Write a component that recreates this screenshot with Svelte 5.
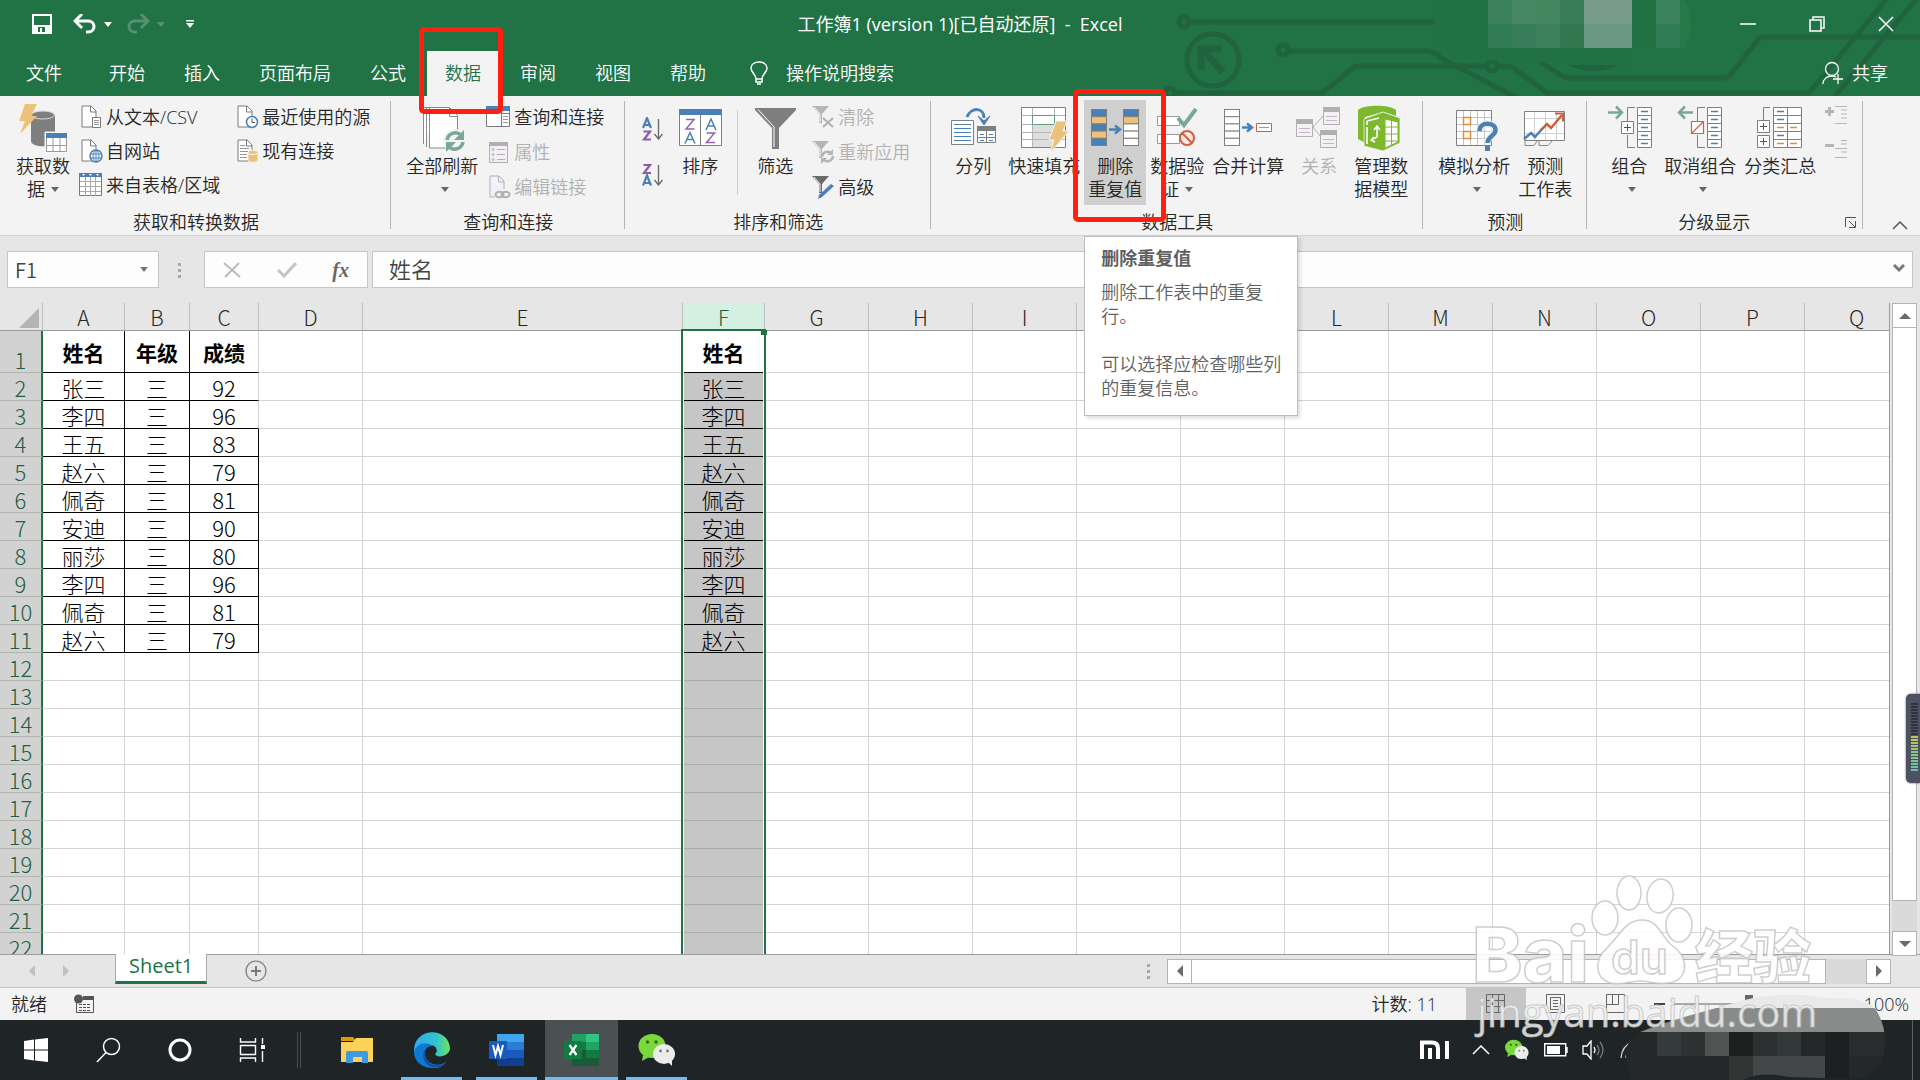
<script lang="ts">
	interface Tool {
		icon: string;
		lines: string[];
		arrow?: boolean;
		disabled?: boolean;
		active?: boolean;
	}

	interface SmallTool {
		icon: string;
		label: string;
		disabled?: boolean;
	}

	let nameBox = $state('F1');
	let formula = $state('姓名');
	let zoom = $state(50);
	let activeTab = $state('数据');

	const tabs = ['文件', '开始', '插入', '页面布局', '公式', '数据', '审阅', '视图', '帮助'];

	const sources: SmallTool[] = [
		{ icon: 'docText', label: '从文本/CSV' },
		{ icon: 'docWeb', label: '自网站' },
		{ icon: 'tableBlue', label: '来自表格/区域' }
	];

	const recent: SmallTool[] = [
		{ icon: 'docClock', label: '最近使用的源' },
		{ icon: 'docData', label: '现有连接' }
	];

	const connections: SmallTool[] = [
		{ icon: 'pane', label: '查询和连接' },
		{ icon: 'props', label: '属性', disabled: true },
		{ icon: 'docLink', label: '编辑链接', disabled: true }
	];

	const filters: SmallTool[] = [
		{ icon: 'filterClear', label: '清除', disabled: true },
		{ icon: 'filterRedo', label: '重新应用', disabled: true },
		{ icon: 'filterPen', label: '高级' }
	];

	const dataTools: Tool[] = [
		{ icon: 'split', lines: ['分列'] },
		{ icon: 'flash', lines: ['快速填充'] },
		{ icon: 'dedupe', lines: ['删除', '重复值'], active: true },
		{ icon: 'validate', lines: ['数据验', '证'], arrow: true },
		{ icon: 'merge', lines: ['合并计算'] },
		{ icon: 'relation', lines: ['关系'], disabled: true },
		{ icon: 'model', lines: ['管理数', '据模型'] }
	];

	const forecast: Tool[] = [
		{ icon: 'whatif', lines: ['模拟分析', ''], arrow: true },
		{ icon: 'forecast', lines: ['预测', '工作表'] }
	];

	const outline: Tool[] = [
		{ icon: 'group', lines: ['组合', ''], arrow: true },
		{ icon: 'ungroup', lines: ['取消组合', ''], arrow: true },
		{ icon: 'subtotal', lines: ['分类汇总'] }
	];

	const columns = [
		{ id: 'A', width: 82 },
		{ id: 'B', width: 65 },
		{ id: 'C', width: 69 },
		{ id: 'D', width: 104 },
		{ id: 'E', width: 320 },
		{ id: 'F', width: 82 },
		...'GHIJKLMNOPQ'.split('').map((id) => ({ id, width: 104 }))
	];

	const records = [
		['姓名', '年级', '成绩'],
		['张三', '三', '92'],
		['李四', '三', '96'],
		['王五', '三', '83'],
		['赵六', '三', '79'],
		['佩奇', '三', '81'],
		['安迪', '三', '90'],
		['丽莎', '三', '80'],
		['李四', '三', '96'],
		['佩奇', '三', '81'],
		['赵六', '三', '79']
	];

	const rows = Array.from({ length: 22 }, (_, i) => i);

	function cell(row: number, col: string) {
		const record = records[row];
		if (!record) return '';
		if (col === 'F') return record[0];
		return record['ABC'.indexOf(col)] ?? '';
	}

	const bolt = '#ecc27b';
	const blue = '#4a80b8';
	const doc = (c = '#7a7a7a', fill = '#fff') =>
		`<path d="M4 1h9l5 5v16H4z" fill="${fill}" stroke="${c}"/><path d="M12.500 1v6h5.500" fill="none" stroke="${c}"/>`;
	const funnel = (c: string) =>
		`<path d="M2 1h17l-7 8v9H9V9z" fill="${c}"/><path d="M4 2l6 7v8" fill="none" stroke="#fff"/>`;
	const bar = (x: number, fills: string[], w = 15) =>
		fills.map((f, i) => `<rect x="${x + 0.5}" y="${5.5 + i * 7.2}" width="${w}" height="7.2" fill="${f}" stroke="#7f7f7f"/>`).join('');
	const list = (x: number) =>
		[0, 1, 2, 3, 4]
			.map((i) => `<path d="M${x + 0.5} ${3.5 + i * 8}h14v8h-14z" fill="#fff" stroke="#7f7f7f"/><path d="M${x + 4} ${7.5 + i * 8}h7" stroke="${blue}" stroke-width="1.500"/>`)
			.join('');
	const plusBox = (x: number, y: number) =>
		`<path d="M${x + 0.5} ${y + 0.5}h12v12h-12z" fill="#fff" stroke="#7f7f7f"/><path d="M${x + 3} ${y + 6.5}h7m-3.500-3.500v7" stroke="#555"/>`;
	const relBox = (x: number, y: number) =>
		`<path d="M${x + 0.5} ${y + 0.5}h16v17h-16z" fill="#f5f0f7" stroke="#b0b0b0"/><path d="M${x} ${y}h17v5h-17z" fill="#b0b0b0"/><path d="M${x + 3} ${y + 9.5}h11m-11 4h11" stroke="#c0b8c4"/>`;

	const large: Record<string, string> = {
		getData: `<path d="M12 11v26c0 7 24 7 24 0V11z" fill="#7f7f7f"/><ellipse cx="24" cy="11" rx="11.500" ry="4" fill="#7f7f7f" stroke="#ddd"/><path d="M6 0h12l-6 12h6L1 30l5-13H0z" fill="${bolt}"/><path d="M26 28h23v21H26z" fill="#fff" stroke="#f3f3f3"/><path d="M27.500 30v17.500h20V30m-20 11.500h20M34 34v13m7-13v13" fill="none" stroke="#9a9a9a"/><path d="M27 29h21v5H27z" fill="${blue}"/>`,
		refresh: `<path d="M5.500 40V3.500h17M8.500 43V3.500M11.500 3.500h20l8 8V44h-28z" fill="#fff" stroke="#8a8a8a"/><path d="M31.500 3.500v9h8" fill="none" stroke="#8a8a8a"/><circle cx="37" cy="37" r="12" fill="#f3f3f3"/><path d="M29 36a8.500 8.500 0 0 1 14-5M45 38a8.500 8.500 0 0 1-14 5" fill="none" stroke="#7aa896" stroke-width="3.500"/><path d="M46 26v10H36zM28 48V38h10z" fill="#7aa896"/>`,
		sort: `<path d="M3.500 5.500h42v36h-42z" fill="#fff" stroke="#7f7f7f"/><path d="M24.500 11v31" stroke="#7f7f7f"/><path d="M3 5h43v6H3z" fill="${blue}"/><g fill="none" stroke-width="1.500"><path d="M10 15.500h8L10 25h8.500M30.500 29h8L30.500 38.500h8.500" stroke="#9261b5"/><path d="M9 39.500l5-11 5 11m-8-4h6M30 26l5-11 5 11m-8-4h6" stroke="${blue}"/></g>`,
		filter: `<path d="M4 4h41v2L28 24v21h-7V24L4 6z" fill="#7f7f7f"/><path d="M7 5.500L23 23v20" fill="none" stroke="#fff"/>`,
		split: `<path d="M2.500 16.500h22v24h-22z" fill="#fff" stroke="#7f7f7f"/><path d="M5 20.500h17m-17 4h17m-17 4h17m-17 4h17m-17 4h17" stroke="${blue}" stroke-width="1.200"/><path d="M18 13C22 3 35 3 35 14" fill="none" stroke="${blue}" stroke-width="3"/><path d="M29 12l6 5 6-5-6 9z" fill="${blue}" stroke="${blue}"/><path d="M28.500 22.500h18v16h-18z" fill="#fff" stroke="#7f7f7f"/><path d="M28 22h19v5H28z" fill="#7f7f7f"/><path d="M37.500 27v11M28 33.500h19" stroke="#7f7f7f"/><path d="M31 30.500h4m5 0h4m-13 6h4m5 0h4" stroke="${blue}"/>`,
		flash: `<path d="M1.500 3.500h44v40h-44z" fill="#fff" stroke="#7f7f7f"/><path d="M12 20h22v23H12z" fill="#dedede"/><path d="M12.500 4v39m22-39v39M2 11.500h43M2 20.500h43M2 28.500h43M2 35.500h43" stroke="#b5b5b5"/><path d="M12.500 11.500h22v9h-22z" fill="#fff" stroke="#5f9c82"/><path d="M36 17h11l-4 10h6L30 49l4-13h-5z" fill="${bolt}" stroke="#f3f3f3"/>`,
		dedupe: `${bar(0, [blue, bolt, blue, bolt, blue])}${bar(32, [blue, bolt, '#fff', '#fff', '#fff'])}<path d="M18 25.500h11m-5-4l5 4-5 4" fill="none" stroke="${blue}" stroke-width="2.500"/>`,
		validate: `<path d="M4.500 12.500h22v9h-22zM4.500 30.500h22v9h-22z" fill="#fff" stroke="#9a9a9a"/><path d="M25 14l6 7L43 5" fill="none" stroke="#7aa896" stroke-width="4"/><circle cx="34" cy="34" r="7" fill="#fbeae5" stroke="#d35e3f" stroke-width="2"/><path d="M29 29l10 10" stroke="#d35e3f" stroke-width="2"/>`,
		merge: `${bar(0, ['#fff', '#fff', '#fff', '#fff', '#fff'])}<path d="M18 23.500h10m-5-4l5 4-5 4" fill="none" stroke="${blue}" stroke-width="2.500"/><path d="M32.500 19.500h15v8h-15z" fill="#fff" stroke="#d35e3f"/><path d="M35 23.500h10" stroke="#999"/>`,
		relation: `<path d="M18 23L29 11M18 23l8 10" stroke="#b0b0b0"/>${relBox(1, 15)}${relBox(28, 3)}${relBox(25, 26)}`,
		model: `<path d="M1 6C8 0 34 1 39 6v6L26 8 8 13v26l-7-4z" fill="#7db82f"/><path d="M7 15l19-7 17 6v25l-17 8-19-5z" fill="#7db82f" stroke="#f3f3f3" stroke-width=".8"/><path d="M28 15l13 3v20l-13 6zM28 23h13M28 30h13M28 37h13M34.500 17v24" fill="#fff" stroke="#7db82f"/><path d="M10 17l12-3M10 21v-4M10 23v17" stroke="#fff" stroke-width="1.500"/><path d="M20 23v10l-6 3m3-10l3-4 3 4m-6 7l-3 3 4 2" fill="none" stroke="#fff" stroke-width="1.500"/>`,
		whatif: `<path d="M6.500 6.500h35v35h-35z" fill="#fff" stroke="#7f7f7f"/><path d="M13.500 7v34m7-34v34m7-34v34m7-34v34M7 13.500h34M7 20.500h34M7 27.500h34M7 34.500h34" stroke="#c4c4c4"/><path d="M13.500 13.500h7v7h-7zM13.500 27.500h7v7h-7z" fill="#fff" stroke="#e58a35" stroke-width="1.500"/><path d="M30 27c0-9 15-9 15-1 0 6-7.500 5-7.500 13" fill="none" stroke="#f3f3f3" stroke-width="7"/><path d="M29.500 27c0-10 16-9 16-1 0 6-8 6-8 13" fill="none" stroke="${blue}" stroke-width="4.500"/><path d="M35 42h5v5h-5z" fill="${blue}"/>`,
		forecast: `<path d="M3.500 7.500h40v29h-40z" fill="#fff" stroke="#7f7f7f"/><path d="M13.500 8v28m11-28v28m11-28v28M4 14.500h39M4 29.500h39" stroke="#d0d0d0"/><path d="M4 37l0 4.500h9l3-4.500m2 0v4.500h9l4-4.500" fill="none" stroke="#8a8a8a"/><path d="M3 35l7-6 4 4 7-8" fill="none" stroke="${blue}" stroke-width="2.500"/><path d="M20 26l6-6 4 4 11-13" fill="none" stroke="#d35e3f" stroke-width="2.500"/><path d="M34 9.500h8v8" fill="none" stroke="#d35e3f" stroke-width="2"/>`,
		group: `<path d="M3 8.500h14m-6-6l6 6-6 6" fill="none" stroke="#7aa896" stroke-width="2.500"/><path d="M30 3.500h-7.500V17m0 14v12.500H30" fill="none" stroke="#7f7f7f"/>${plusBox(16, 17)}${list(32)}`,
		ungroup: `<path d="M17 8.500H3m6-6l-6 6 6 6" fill="none" stroke="#7aa896" stroke-width="2.500"/><path d="M29 3.500h-7.500V17m0 14v12.500H29" fill="none" stroke="#7f7f7f"/><path d="M15.500 17.500h12v12h-12zm0 12l12-12" fill="#fff" stroke="#d35e3f" stroke-width="1.200"/>${list(31)}`,
		subtotal: `<path d="M14 3.500H7.500V17" fill="none" stroke="#7f7f7f"/>${plusBox(1, 16)}${plusBox(1, 31)}<path d="M17.500 3.500h28v40h-28zm14 0v40m-14-32h28m-28 8h28m-28 8h28m-28 8h28" fill="#fff" stroke="#7f7f7f"/><path d="M21 7.500h7m-7 8h7m-7 16h7" stroke="${blue}" stroke-width="1.500"/><path d="M21 23.500h7m6 0h7m-20 16h7m6 0h7" stroke="#e58a35" stroke-width="1.500"/>`
	};

	const small: Record<string, string> = {
		docText: `${doc()}<path d="M14.500 12.500h8v10h-8z" fill="#fff" stroke="#7a7a7a"/><path d="M16 15.500h5m-5 2h5m-5 2h5" stroke="#9a9a9a"/>`,
		docWeb: `${doc()}<circle cx="18" cy="17" r="6" fill="#fff" stroke="${blue}" stroke-width="1.500"/><path d="M12 15h12m-12 4h12M18 11v12m0-12c-4 3-4 9 0 12 4-3 4-9 0-12" fill="none" stroke="${blue}"/>`,
		tableBlue: `<path d="M1.500 1.500h22v21h-22z" fill="#fff" stroke="#7a7a7a"/><path d="M7.500 4v19m5-19v19m5-19v19M2 8.500h21M2 13.500h21M2 18.500h21" stroke="#aaa"/><path d="M1 0h23v4H1z" fill="${blue}"/><path d="M4 1h3L5.500 3zM11 1h3l-1.500 2zM18 1h3l-1.500 2z" fill="#fff"/>`,
		docClock: `${doc()}<circle cx="18" cy="17" r="5.500" fill="#fff" stroke="${blue}" stroke-width="1.500"/><path d="M18 13.500v4h3" fill="none" stroke="#555"/>`,
		docData: `${doc()}<path d="M6 6.500h5m-5 3h9m-9 3h8m-8 3h7m-7 3h7" stroke="#999"/><path d="M14 13.500c0-3 10-3 10 0V21c0 3-10 3-10 0z" fill="${bolt}" stroke="#f3f3f3"/><path d="M14.500 14c1 2 8 2 9 0" fill="none" stroke="#fff"/>`,
		pane: `<path d="M.5 2.500h23v19H.5z" fill="#fff" stroke="#7a7a7a"/><path d="M0 1h24v5H0z" fill="${blue}"/><path d="M15.500 6v16M15 8.500h8" stroke="#7a7a7a"/><path d="M17 11.500h5m-5 3h5m-5 3h5" stroke="#999"/>`,
		props: `<path d="M3.500 2.500h18v20h-18z" fill="#f5f0f7" stroke="#b0b0b0"/><path d="M3 2h19v4H3z" fill="#b0b0b0"/><path d="M11 9.500h8m-8 5h8m-8 5h8" stroke="#b0b0b0"/><g fill="none" stroke="#b0b0b0"><circle cx="7" cy="9.500" r="1"/><circle cx="7" cy="14.500" r="1"/><circle cx="7" cy="19.500" r="1"/></g>`,
		docLink: `${doc('#b5afb8', '#f5f0f7')}<path d="M9 14h16v9H9z" fill="#f3f3f3"/><g fill="none" stroke="#b0b0b0" stroke-width="2"><ellipse cx="13.500" cy="19.500" rx="4" ry="2.800"/><ellipse cx="19.500" cy="19.500" rx="4" ry="2.800"/></g>`,
		filterClear: `${funnel('#b5b5b5')}<path d="M13 13l10 9m0-9l-10 9" stroke="#b0b0b0" stroke-width="2"/>`,
		filterRedo: `${funnel('#b5b5b5')}<path d="M12 17a5.500 5.500 0 0 1 9-4m2 3a5.500 5.500 0 0 1-9 4" fill="none" stroke="#b5b5b5" stroke-width="2.500"/><path d="M23 9v6h-6zM11 24v-6h6z" fill="#b5b5b5"/>`,
		filterPen: `${funnel('#6a6a6a')}<path d="M21 9l3 2-12 11-4 2 1-4z" fill="${blue}"/>`
	};
</script>

{#snippet caret()}
	<svg class="caret" viewBox="0 0 8 5" aria-hidden="true"><path d="M0 0h8L4 5z" fill="currentColor" /></svg>
{/snippet}

{#snippet tool(t: Tool)}
	<button type="button" class="tool" class:active={t.active} disabled={t.disabled}>
		<svg class="icon-lg" viewBox="0 0 48 48" aria-hidden="true">{@html large[t.icon]}</svg>
		{#each t.lines as line, i}
			<span class="line">
				{line}{#if t.arrow && i === t.lines.length - 1}{@render caret()}{/if}
			</span>
		{/each}
	</button>
{/snippet}

{#snippet smallTools(items: SmallTool[])}
	<div class="small-tools">
		{#each items as item}
			<button type="button" class="small-tool" disabled={item.disabled}>
				<svg class="icon-sm" viewBox="0 0 24 24" aria-hidden="true">{@html small[item.icon]}</svg>
				<span>{item.label}</span>
			</button>
		{/each}
	</div>
{/snippet}

{#snippet wechat()}
	<ellipse cx="14" cy="13" rx="13.500" ry="12" fill="#7bd83b" />
	<path d="M5 22l-1 6 7-4z" fill="#7bd83b" />
	<circle cx="9.500" cy="9" r="1.700" fill="#2d6b1c" /><circle cx="18" cy="9" r="1.700" fill="#2d6b1c" />
	<ellipse cx="26" cy="21" rx="11" ry="10" fill="#ececec" />
	<path d="M30 29l4 4 0-6z" fill="#ececec" />
	<circle cx="22.500" cy="18" r="1.400" fill="#777" /><circle cx="29.500" cy="18" r="1.400" fill="#777" />
{/snippet}

<div class="app">
	<header>
		<svg class="circuit" viewBox="0 0 860 96" aria-hidden="true">
			<g fill="none" stroke="#21623f" stroke-width="5">
				<circle cx="124" cy="22" r="5" />
				<path d="M131 22h250" />
				<circle cx="153" cy="60" r="26" />
				<path d="M141 70V49h20M143 50l20 22" stroke-width="7" />
				<circle cx="223" cy="50" r="5" />
				<path d="M229 51h138q8 0 14 7l76 40" />
				<circle cx="110" cy="93" r="5" />
				<path d="M117 93h145l32-26q3-1 6-1h126" />
				<circle cx="432" cy="66" r="5" />
				<path d="M438 66h8q6 0 10 4l31 23h262L828-3M775 96L858-3" />
				<path d="M480 62l22 14q3 2 8 2h154q4 0 7-4l26-33q3-4 8-4h156" />
			</g>
			<path d="M375 24C375 8 380 0 384 0h240q7 10 7 24t-5 24H572v16q-40 2-80-2l-84-2C384 54 375 40 375 24z" fill="#217144" />
			<path d="M508 65q26 12 50 0z" fill="#21623f" />
			<g>
				<path d="M428 0h24v24h-24z" fill="#3a805b" /><path d="M452 0h24v24h-24z" fill="#458863" />
				<path d="M476 0h24v24h-24z" fill="#43865f" /><path d="M500 0h24v24h-24z" fill="#3a7e59" />
				<path d="M524 0h48v24h-48z" fill="#779b87" /><path d="M596 0h24v24h-24z" fill="#3c845e" />
				<path d="M428 24h24v24h-24z" fill="#327c55" /><path d="M452 24h24v24h-24z" fill="#387d59" />
				<path d="M476 24h24v24h-24z" fill="#3c7f5b" /><path d="M500 24h24v24h-24z" fill="#317850" />
				<path d="M524 24h48v24h-48z" fill="#6b9880" /><path d="M596 24h24v24h-24z" fill="#307d55" />
				<path d="M620 0h4q7 10 7 24t-5 24h-6z" fill="#287749" />
			</g>
		</svg>

		<div class="titlebar">
			<div class="quick">
				<button type="button" aria-label="保存">
					<svg width="20" height="20" viewBox="0 0 20 20"><path d="M1 1h18v18H1z" fill="none" stroke="#fff" stroke-width="2" /><path d="M2 11h16v8H2z" fill="#fff" /><path d="M6 13h7v5H6z" fill="#217346" /><path d="M8 14h2v4H8z" fill="#fff" /></svg>
				</button>
				<button type="button" aria-label="撤消">
					<svg width="24" height="20" viewBox="0 0 24 20"><path d="M9 0L2 7l7 7M3 7h12c8 0 8 11 0 11h-2" fill="none" stroke="#fff" stroke-width="3" /></svg>
					{@render caret()}
				</button>
				<button type="button" class="faded" aria-label="恢复">
					<svg width="24" height="20" viewBox="0 0 24 20"><path d="M15 0l7 7-7 7M21 7H9C1 7 1 18 9 18h2" fill="none" stroke="currentColor" stroke-width="3" /></svg>
					{@render caret()}
				</button>
				<button type="button" aria-label="自定义快速访问工具栏">
					<svg width="8" height="8" viewBox="0 0 8 8"><path d="M0 0h8v1.500H0zM0 3h8L4 8z" fill="#fff" /></svg>
				</button>
			</div>
			<h1>工作簿1 (version 1)[已自动还原]&nbsp; -&nbsp; Excel</h1>
			<div class="window-controls">
				<button type="button" aria-label="最小化"><svg width="16" height="16" viewBox="0 0 16 16"><path d="M0 8h16" stroke="#fff" stroke-width="1.500" /></svg></button>
				<button type="button" aria-label="还原"><svg width="16" height="16" viewBox="0 0 16 16"><path d="M1 4h11v11H1zM4 4V1h11v11h-3" fill="none" stroke="#fff" stroke-width="1.500" /></svg></button>
				<button type="button" aria-label="关闭"><svg width="16" height="16" viewBox="0 0 16 16"><path d="M1 1l14 14M15 1L1 15" stroke="#fff" stroke-width="1.500" /></svg></button>
			</div>
		</div>

		<nav class="tabs">
			{#each tabs as tab, i}
				<button type="button" class="tab" class:file={i === 0} class:current={tab === activeTab} onclick={() => (activeTab = tab)}>
					{tab}
					{#if tab === '数据'}<span class="mark mark-tab"></span>{/if}
				</button>
			{/each}
			<button type="button" class="tell">
				<svg width="18" height="24" viewBox="0 0 18 24"><path d="M6 18c0-5-5-6-5-11C1-1 17-1 17 7c0 5-5 6-5 11zM6 18v3h6v-3M7 23h4" fill="none" stroke="#fff" stroke-width="1.500" /></svg>
				操作说明搜索
			</button>
			<button type="button" class="share">
				<svg width="22" height="24" viewBox="0 0 22 24"><circle cx="10" cy="8" r="6.500" fill="none" stroke="#fff" stroke-width="1.300" /><path d="M1 23c0-5 4-8 9-8 2 0 3 0 4 1M16 13v10m-5-5h10" fill="none" stroke="#fff" stroke-width="1.300" /></svg>
				共享
			</button>
		</nav>
	</header>

	<section class="ribbon">
		<div class="group tight">
			<div class="tools">
				{@render tool({ icon: 'getData', lines: ['获取数', '据'], arrow: true })}
				{@render smallTools(sources)}
				{@render smallTools(recent)}
			</div>
			<div class="group-label">获取和转换数据</div>
		</div>
		<div class="group">
			<div class="tools">
				{@render tool({ icon: 'refresh', lines: ['全部刷新', ''], arrow: true })}
				{@render smallTools(connections)}
			</div>
			<div class="group-label">查询和连接</div>
		</div>
		<div class="group">
			<div class="tools">
				<div class="sorts">
					<button type="button" aria-label="升序">
						<svg width="22" height="24" viewBox="0 0 22 24"><g fill="none" stroke-width="2.200"><path d="M1 11L5 1l4 10M2.500 8h5" stroke={blue} /><path d="M1.500 14.500H8l-6 8h7" stroke="#8b5bb0" /></g><path d="M16.500 2v20m-4-5l4 5 4-5" fill="none" stroke="#666" stroke-width="1.300" /></svg>
					</button>
					<button type="button" aria-label="降序">
						<svg width="22" height="24" viewBox="0 0 22 24"><g fill="none" stroke-width="2.200"><path d="M1 22.500l4-10 4 10M2.500 20h5" stroke={blue} /><path d="M1.500 2H8L2 10h7" stroke="#8b5bb0" /></g><path d="M16.500 2v20m-4-5l4 5 4-5" fill="none" stroke="#666" stroke-width="1.300" /></svg>
					</button>
				</div>
				{@render tool({ icon: 'sort', lines: ['排序'] })}
				<div class="divider"></div>
				{@render tool({ icon: 'filter', lines: ['筛选'] })}
				{@render smallTools(filters)}
			</div>
			<div class="group-label">排序和筛选</div>
		</div>
		<div class="group">
			<div class="tools">
				{#each dataTools as t}
					{#if t.active}
						<div class="hovered">
							{@render tool(t)}
							<div class="tooltip" role="tooltip">
								<strong>删除重复值</strong>
								<p>删除工作表中的重复行。</p>
								<p>可以选择应检查哪些列的重复信息。</p>
							</div>
							<span class="mark mark-tool"></span>
						</div>
					{:else}
						{@render tool(t)}
					{/if}
				{/each}
			</div>
			<div class="group-label">数据工具</div>
		</div>
		<div class="group">
			<div class="tools">
				{#each forecast as t}{@render tool(t)}{/each}
			</div>
			<div class="group-label">预测</div>
		</div>
		<div class="group">
			<div class="tools">
				{#each outline as t}{@render tool(t)}{/each}
				<div class="levels">
					<button type="button" disabled aria-label="显示明细数据">
						<svg width="24" height="20" viewBox="0 0 24 20"><path d="M1 6.500h9M5.500 2v9" stroke="#b5b5b5" stroke-width="3" /><path d="M11 1.500h12M17 5h6m-6 4h6m-6 4h6M11 18.500h12" stroke="#b5b5b5" /></svg>
					</button>
					<button type="button" disabled aria-label="隐藏明细数据">
						<svg width="24" height="20" viewBox="0 0 24 20"><path d="M1 6.500h9" stroke="#b5b5b5" stroke-width="3" /><path d="M17 1.500h6M11 9.500h12M17 5h6m-6 8h6M11 18.500h12" stroke="#b5b5b5" /></svg>
					</button>
				</div>
			</div>
			<div class="group-label with-launcher">分级显示</div>
			<button type="button" class="launcher" aria-label="分级显示设置">
				<svg width="12" height="12" viewBox="0 0 12 12"><path d="M.5 10V.5H11M4 4l6 6M10.500 4v6.500H4" fill="none" stroke="#555" /></svg>
			</button>
		</div>
		<button type="button" class="collapse" aria-label="折叠功能区">
			<svg width="16" height="10" viewBox="0 0 16 10"><path d="M1 9l7-7 7 7" fill="none" stroke="#555" stroke-width="1.500" /></svg>
		</button>
	</section>

	<section class="formula-bar">
		<div class="box name-box">
			<input aria-label="名称框" bind:value={nameBox} />
			{@render caret()}
		</div>
		<span class="dots"></span>
		<div class="box entry">
			<button type="button" aria-label="取消"><svg width="18" height="16" viewBox="0 0 18 16"><path d="M1 1l16 14M16 1L2 15" stroke="#bbb" stroke-width="2" /></svg></button>
			<button type="button" aria-label="输入"><svg width="20" height="16" viewBox="0 0 20 16"><path d="M1 8l6 6L19 1" fill="none" stroke="#c4c4c4" stroke-width="3" /></svg></button>
			<button type="button" aria-label="插入函数" class="fx"><i>f</i><i>x</i></button>
		</div>
		<div class="box formula">
			<input aria-label="编辑栏" bind:value={formula} />
			<svg width="12" height="9" viewBox="0 0 12 9"><path d="M1 1l5 5 5-5" fill="none" stroke="#777" stroke-width="3" /></svg>
		</div>
	</section>

	<section class="sheet">
		<div class="grid">
			<table>
				<colgroup>
					<col class="row-col" />
					{#each columns as c}<col style:width="{c.width}px" />{/each}
				</colgroup>
				<thead>
					<tr>
						<th class="corner" aria-label="全选"><svg width="20" height="20" viewBox="0 0 20 20"><path d="M20 0v20H0z" fill="#b4b4b4" /></svg></th>
						{#each columns as c}
							<th class:picked={c.id === 'F'}>
								{c.id}
								{#if c.id === 'F'}<span class="selection"></span>{/if}
							</th>
						{/each}
					</tr>
				</thead>
				<tbody>
					{#each rows as r}
						<tr class:first={r === 0}>
							<th>{r + 1}</th>
							{#each columns as c}
								<td
									class:lined={r < records.length && 'ABCF'.includes(c.id)}
									class:edge={r < records.length && ('AB'.includes(c.id) || (c.id === 'C' && r > 2))}
									class:shaded={c.id === 'F' && r > 0}>{cell(r, c.id)}</td
								>
							{/each}
						</tr>
					{/each}
				</tbody>
			</table>
		</div>
		<div class="vscroll">
			<button type="button" aria-label="向上滚动"><svg width="12" height="6" viewBox="0 0 12 6"><path d="M6 0l6 6H0z" fill="#6a6a6a" /></svg></button>
			<div class="thumb"></div>
			<button type="button" aria-label="向下滚动"><svg width="12" height="6" viewBox="0 0 12 6"><path d="M0 0h12L6 6z" fill="#6a6a6a" /></svg></button>
		</div>
	</section>

	<section class="sheet-tabs">
		<div class="sheet-nav">
			<button type="button" aria-label="上一个工作表"><svg width="6" height="12" viewBox="0 0 6 12"><path d="M6 0v12L0 6z" fill="#c0c0c0" /></svg></button>
			<button type="button" aria-label="下一个工作表"><svg width="6" height="12" viewBox="0 0 6 12"><path d="M0 0v12l6-6z" fill="#c0c0c0" /></svg></button>
		</div>
		<button type="button" class="sheet-tab">Sheet1</button>
		<button type="button" class="add-sheet" aria-label="新工作表">
			<svg width="22" height="22" viewBox="0 0 22 22"><circle cx="11" cy="11" r="10" fill="none" stroke="#7a7a7a" stroke-width="1.200" /><path d="M11 6v10M6 11h10" stroke="#7a7a7a" stroke-width="2" /></svg>
		</button>
		<span class="dots"></span>
		<div class="hscroll">
			<button type="button" aria-label="向左滚动"><svg width="6" height="12" viewBox="0 0 6 12"><path d="M6 0v12L0 6z" fill="#6a6a6a" /></svg></button>
			<div class="thumb"></div>
			<button type="button" aria-label="向右滚动"><svg width="6" height="12" viewBox="0 0 6 12"><path d="M0 0v12l6-6z" fill="#6a6a6a" /></svg></button>
		</div>
	</section>

	<section class="status">
		<span>就绪</span>
		<svg class="macro" width="20" height="20" viewBox="0 0 20 20"><path d="M2.500 8v10.500h17V5" fill="none" stroke="#555" /><path d="M9 2h11v4H9z" fill="#555" /><circle cx="4.500" cy="5" r="4.500" fill="#555" /><path d="M5 10.500h12m-12 3h12m-12 3h12" stroke="#555" stroke-dasharray="3 1" /></svg>
		<span class="count">计数: 11</span>
		<div class="views">
			<button type="button" class="on" aria-label="普通"><svg width="20" height="20" viewBox="0 0 20 20"><path d="M.5.5h18v18H.5zm6 0v18m6-18v18M.500 6.500h18m-18 6h18" fill="none" stroke="#666" /></svg></button>
			<button type="button" aria-label="页面布局"><svg width="20" height="20" viewBox="0 0 20 20"><path d="M.5.5h18v18H.5zM4.500 3.500h10v12h-10zM7 6.500h5m-5 3h5m-5 3h5" fill="none" stroke="#666" /></svg></button>
			<button type="button" aria-label="分页预览"><svg width="20" height="20" viewBox="0 0 20 20"><path d="M.5.5h18v18H.5zM.500 10.500h12V.500M6.500.500v10" fill="none" stroke="#666" /></svg></button>
		</div>
		<button type="button" class="minus" aria-label="缩小"></button>
		<input class="zoom" type="range" min="0" max="100" aria-label="显示比例" bind:value={zoom} />
		<span class="percent">100%</span>
	</section>

	<footer class="taskbar">
		<button type="button" aria-label="开始"><svg width="24" height="24" viewBox="0 0 24 24"><path d="M0 3l10-1.400V11.500H0zM11 1.500L24 0v11.500H11zM0 12.500h10v10L0 21zM11 12.500h13V24l-13-1.500z" fill="#fff" /></svg></button>
		<button type="button" aria-label="搜索"><svg width="26" height="26" viewBox="0 0 26 26"><circle cx="16.500" cy="9.500" r="8" fill="none" stroke="#fff" stroke-width="1.500" /><path d="M11 15.500L2 25" stroke="#fff" stroke-width="1.500" /></svg></button>
		<button type="button" aria-label="语音助手"><svg width="24" height="24" viewBox="0 0 24 24"><circle cx="12" cy="12" r="10" fill="none" stroke="#fff" stroke-width="3" /></svg></button>
		<button type="button" aria-label="任务视图"><svg width="26" height="24" viewBox="0 0 26 24"><path d="M1.500 0v4h15V0M1.500 7.500h15v9h-15zM1.500 24v-4h15v4M23.500 0v6m0 7v11" fill="none" stroke="#fff" stroke-width="1.400" /><path d="M22 7h4v4h-4z" fill="#fff" /></svg></button>
		<span class="separator"></span>
		<button type="button" class="pinned" aria-label="文件资源管理器">
			<svg width="34" height="30" viewBox="0 0 34 30"><path d="M1 2h12l3 4H1z" fill="#e09b00" /><path d="M1 7h12l3-4h17v24H1z" fill="#fdd25b" /><path d="M6 28V18q0-2 2-2h18q2 0 2 2v10h-6v-6h-9v6z" fill="#3f9be0" /></svg>
		</button>
		<button type="button" class="pinned running" aria-label="浏览器">
			<svg width="36" height="36" viewBox="0 0 36 36">
				<defs>
					<linearGradient id="edge-a" x2="1"><stop stop-color="#35a9ea" /><stop offset=".6" stop-color="#2fc2d3" /><stop offset="1" stop-color="#6ae65d" /></linearGradient>
				</defs>
				<path d="M0 17C2-5 34-5 36 16c0 8-13 11-15 6 4-3 1-9-5-9C7 12 2 16 0 22z" fill="url(#edge-a)" />
				<path d="M0 20C2 11 14 9 18 14c-6 0-9 6-6 12 4 8 14 8 20 4-4 6-10 7-15 6C6 35 0 28 0 20z" fill="#0f78d4" />
				<path d="M17 14c-7 1-8 8-4 14 4 7 13 6 19 2-4 6-10 6-14 5-11-3-12-19-1-21z" fill="#12509f" />
			</svg>
		</button>
		<button type="button" class="pinned running" aria-label="Word">
			<svg width="36" height="34" viewBox="0 0 36 34"><path d="M8 1h27v8H8z" fill="#41a5ee" /><path d="M8 9h27v8H8z" fill="#2b7cd3" /><path d="M8 17h27v8H8z" fill="#185abd" /><path d="M8 25h27v8H8z" fill="#103f91" /><rect y="8" width="18" height="18" rx="1" fill="#185abd" /><path d="M4 12l2.500 10L9 13l2.500 9L14 12" fill="none" stroke="#fff" stroke-width="2" /></svg>
		</button>
		<button type="button" class="pinned running front" aria-label="Excel">
			<svg width="36" height="34" viewBox="0 0 36 34"><path d="M8 1h14v8H8z" fill="#21a366" /><path d="M22 1h13v8H22z" fill="#33c481" /><path d="M8 9h14v8H8z" fill="#107c41" /><path d="M22 9h13v8H22z" fill="#21a366" /><path d="M8 17h14v16H8z" fill="#185c37" /><path d="M22 17h13v8H22z" fill="#107c41" /><path d="M22 25h13v8H22z" fill="#185c37" /><rect y="8" width="18" height="18" rx="1" fill="#107c41" /><path d="M5.500 12l7 10m0-10l-7 10" stroke="#fff" stroke-width="2.200" /></svg>
		</button>
		<button type="button" class="pinned running" aria-label="微信">
			<svg width="38" height="34" viewBox="0 0 38 34">{@render wechat()}</svg>
		</button>
		<div class="tray">
			<svg width="30" height="20" viewBox="0 0 30 20"><path d="M2 19V2.500h10q6 0 6 6V19M10 8v11M27 1v18" fill="none" stroke="#fff" stroke-width="4" /></svg>
			<svg width="18" height="10" viewBox="0 0 18 10"><path d="M1 9l8-8 8 8" fill="none" stroke="#fff" stroke-width="1.500" /></svg>
			<svg width="26" height="22" viewBox="0 0 38 34">{@render wechat()}</svg>
			<svg width="24" height="14" viewBox="0 0 24 14"><path d="M.7.7h21v12h-21zM23 4v6" fill="none" stroke="#fff" stroke-width="1.400" /><path d="M3 3h13v8H3z" fill="#fff" /></svg>
			<svg width="24" height="20" viewBox="0 0 24 20"><path d="M1 6h4l4-5v18l-4-5H1z" fill="none" stroke="#fff" stroke-width="1.300" /><path d="M12 7q2 3 0 6" fill="none" stroke="#fff" stroke-width="1.300" /><path d="M15 5q4 5 0 10M18 2q6 8 0 16" fill="none" stroke="#777" stroke-width="1.300" /></svg>
			<svg width="16" height="20" viewBox="0 0 16 20"><path d="M1 18Q2 6 12 2M6 18Q6 10 13 7" fill="none" stroke="#ddd" stroke-width="1.300" /></svg>
		</div>
	</footer>

	<svg class="smudge" width="264" height="86" viewBox="0 0 264 86" aria-hidden="true">
		<clipPath id="smudge"><path d="M0 60Q0 46 14 38C50 24 80 17 108 9q30-10 70-8 20 4 44 3 20 2 28 12 10 16 9 35-2 26-26 34l-70-2q-28-6-46 3H6Q0 80 0 60z" /></clipPath>
		<g clip-path="url(#smudge)">
			<path d="M0 0h264v14H0z" fill="#e9e9e9" />
			<path d="M0 14h264v24H0z" fill="#898b8a" />
			<path d="M0 38h264v48H0z" fill="#242829" />
			<path d="M31 38h24v24H31z" fill="#353a3b" /><path d="M79 38h24v24H79z" fill="#4f5352" />
			<path d="M103 38h24v24h-24z" fill="#1c201f" /><path d="M151 38h24v24h-24z" fill="#333839" />
			<path d="M55 38h24v24H55z" fill="#2e3232" /><path d="M103 62h24v24h-24z" fill="#303433" />
			<path d="M127 62h72v24h-72z" fill="#434747" /><path d="M199 38h24v48h-24z" fill="#1c2021" />
			<path d="M127 38h24v24h-24z" fill="#2c3031" /><path d="M223 38h40v24h-40z" fill="#282c2d" />
		</g>
	</svg>

	<svg class="watermark" width="360" height="190" viewBox="0 0 360 190">
		<g fill="#fff" fill-opacity=".88" stroke="#bdbdbd" stroke-opacity=".75" stroke-width="1.500">
			<ellipse cx="145" cy="58" rx="13" ry="17" />
			<ellipse cx="169" cy="33" rx="12" ry="17" />
			<ellipse cx="200" cy="36" rx="13" ry="17" transform="rotate(10 200 36)" />
			<ellipse cx="219" cy="65" rx="13" ry="17" />
			<path d="M182 60c18 0 18 17 32 27 16 12 14 34-6 36-12 2-16-2-28-2s-18 5-30 2c-16-5-15-24-4-34 13-12 19-29 36-29z" />
			<text class="wm-latin" x="12" y="122">Bai</text>
			<text class="wm-cjk" x="235" y="118">经验</text>
			<text class="wm-du" x="151" y="114">du</text>
			<text class="wm-url" x="17" y="167">jingyan.baidu.com</text>
		</g>
	</svg>

	<div class="meter" aria-hidden="true"></div>
</div>

<style>
	:global(body) {
		margin: 0;
	}

	.app {
		position: relative;
		display: flex;
		flex-direction: column;
		height: 100vh;
		overflow: hidden;
		background: #e6e6e6;
		color: #262626;
		font-family: 'Open Sans', 'Noto Sans CJK SC', sans-serif;
		font-size: 18px;
		font-weight: 350;
		line-height: 24px;
	}

	button,
	input {
		margin: 0;
		padding: 0;
		border: 0;
		background: none;
		color: inherit;
		font: inherit;
	}

	svg {
		flex: none;
	}

	.caret {
		width: 8px;
		height: 5px;
	}

	/* title bar and tabs */
	header {
		position: relative;
		background: #217346;
		color: #fff;
	}

	.circuit {
		position: absolute;
		right: 0;
		top: 0;
		width: 860px;
		height: 96px;
	}

	.titlebar {
		position: relative;
		display: grid;
		grid-template-columns: 1fr auto 1fr;
		align-items: center;
		height: 48px;
	}

	.quick {
		display: flex;
		align-items: center;
		gap: 21px;
		padding-left: 32px;
	}

	.quick button {
		display: flex;
		align-items: center;
		gap: 7px;
	}

	.quick .faded {
		margin-left: -7px;
		color: #569173;
	}

	h1 {
		margin: 0;
		font-size: 18px;
		font-weight: 400;
		white-space: nowrap;
	}

	.window-controls {
		display: flex;
		justify-content: flex-end;
	}

	.window-controls button {
		display: flex;
		align-items: center;
		justify-content: center;
		width: 69px;
		height: 48px;
	}

	.tabs {
		position: relative;
		display: flex;
		gap: 3px;
		margin-top: 3px;
		height: 45px;
	}

	.tab {
		position: relative;
		padding: 0 18px 2px;
	}

	.tab.file {
		padding: 0 26px 2px;
	}

	.tab.current {
		background: #f3f3f3;
		color: #217346;
	}

	.tell,
	.share {
		display: flex;
		align-items: center;
		gap: 18px;
		padding: 0 0 2px 23px;
	}

	.share {
		gap: 8px;
		margin-left: auto;
		padding-right: 32px;
	}

	.mark {
		position: absolute;
		z-index: 5;
		box-sizing: border-box;
		border: 5px solid #ff2010;
		border-radius: 5px;
		pointer-events: none;
	}

	.mark-tab {
		inset: -24px -4px -18px -8px;
	}

	.mark-tool {
		inset: -11px -20px -17px -11px;
	}

	/* ribbon */
	.ribbon {
		display: flex;
		height: 139px;
		padding-left: 1px;
		border-bottom: 1px solid #d2d2d2;
		background: #f3f3f3;
	}

	.group {
		position: relative;
		padding: 4px 11px 0;
	}

	.group::after {
		content: '';
		position: absolute;
		right: 0;
		top: 5px;
		bottom: 6px;
		width: 1px;
		background: #b4b4b4;
	}

	.tools {
		display: flex;
		height: 105px;
	}

	.group-label {
		margin-top: 5px;
		text-align: center;
	}

	.with-launcher {
		padding-right: 22px;
	}

	.tool {
		display: flex;
		flex-direction: column;
		align-items: center;
		min-width: 62px;
		height: 105px;
		padding: 4px 4px 0;
		white-space: nowrap;
	}

	.tool.active {
		background: #cfcfcf;
	}

	.tool:disabled,
	.small-tool:disabled {
		color: #b1b1b1;
	}

	.icon-lg {
		width: 48px;
		height: 48px;
		margin-bottom: 3px;
		overflow: visible;
	}

	.line {
		display: flex;
		align-items: center;
		height: 23px;
		line-height: 23px;
	}

	.line .caret {
		margin-left: 6px;
		color: #666;
	}

	.small-tools {
		display: flex;
		flex-direction: column;
	}

	.small-tool {
		box-sizing: border-box;
		display: flex;
		align-items: center;
		gap: 4px;
		height: 35px;
		padding: 0 10px 1px 4px;
		white-space: nowrap;
	}

	.tight .small-tool {
		height: 34px;
	}

	.icon-sm {
		width: 24px;
		height: 24px;
		overflow: visible;
	}

	.sorts,
	.levels {
		display: flex;
		flex-direction: column;
		align-items: center;
		width: 33px;
		padding-top: 17px;
		gap: 22px;
	}

	.levels {
		width: 32px;
		padding-top: 5px;
		gap: 14px;
	}

	.sorts button,
	.levels button {
		display: flex;
	}

	.divider {
		width: 1px;
		height: 85px;
		margin: 10px 6px 0;
		background: #d0d0d0;
	}

	.launcher {
		position: absolute;
		right: 6px;
		bottom: 6px;
		display: flex;
	}

	.collapse {
		align-self: flex-end;
		margin: 0 12px 5px auto;
		display: flex;
	}

	.hovered {
		position: relative;
	}

	.tooltip {
		position: absolute;
		z-index: 4;
		left: 0;
		top: 136px;
		box-sizing: border-box;
		width: 214px;
		padding: 9px 15px 15px 16px;
		border: 1px solid #bebebe;
		background: #fff;
		box-shadow: 2px 2px 4px rgba(0, 0, 0, 0.15);
		color: #5f5f5f;
	}

	.tooltip p {
		margin: 10px 0 0;
	}

	.tooltip p + p {
		margin-top: 24px;
	}

	/* formula bar */
	.formula-bar {
		display: flex;
		align-items: flex-start;
		height: 52px;
		padding: 15px 7px 0;
	}

	.box {
		box-sizing: border-box;
		display: flex;
		align-items: center;
		height: 37px;
		border: 1px solid #c6c6c6;
		background: #fdfdfd;
		color: #444;
		font-family: 'Noto Sans CJK SC', sans-serif;
		font-size: 20px;
	}

	.name-box {
		width: 152px;
		padding: 0 10px 0 7px;
	}

	.name-box input {
		width: 100%;
		min-width: 0;
	}

	.name-box .caret {
		color: #777;
		flex: none;
	}

	.dots {
		align-self: center;
		width: 3px;
		height: 15px;
		background: repeating-linear-gradient(#a8a8a8 0 3px, transparent 3px 6px);
	}

	.formula-bar .dots {
		margin: 0 23px 14px 19px;
	}

	.entry {
		justify-content: space-between;
		width: 164px;
		padding: 0 18px;
	}

	.entry button {
		display: flex;
	}

	.fx {
		font-family: 'Liberation Serif', serif;
		font-weight: 700;
		color: #666;
	}

	.formula {
		flex: 1;
		margin-left: 4px;
		padding: 0 7px 3px 16px;
		font-size: 22px;
	}

	.formula input {
		flex: 1;
	}

	/* grid */
	.sheet {
		display: flex;
		flex: 1;
		min-height: 0;
	}

	.grid {
		flex: 1;
		min-width: 0;
		overflow: hidden;
		border-right: 1px solid #9b9b9b;
		background: #fff;
	}

	table {
		width: max-content;
		min-width: 1909px;
		table-layout: fixed;
		border-collapse: separate;
		border-spacing: 0;
		font-family: 'Noto Sans CJK SC', sans-serif;
		font-size: 22px;
		font-weight: 300;
		color: #000;
	}

	.row-col {
		width: 43px;
	}

	th,
	td {
		box-sizing: border-box;
		height: 28px;
		padding: 0;
		border-right: 1px solid #d4d4d4;
		border-bottom: 1px solid #d4d4d4;
		line-height: 24px;
		text-align: center;
		font-weight: inherit;
	}

	thead th {
		position: relative;
		border-right-color: #bdbdbd;
		border-bottom-color: #9b9b9b;
		background: #e6e6e6;
		color: #262626;
		font-size: 21px;
	}

	thead .corner svg {
		display: block;
		margin: 2px 3px 0 auto;
	}

	thead .picked {
		background: #d3f0e0;
		color: #215e3f;
	}

	tbody th {
		padding-bottom: 1px;
		border-right: 2px solid #217346;
		border-bottom-color: #b4b4b4;
		background: #d2d2d2;
		color: #215e3f;
		vertical-align: bottom;
	}

	.first th,
	.first td {
		height: 42px;
	}

	.first td {
		font-size: 21px;
		font-weight: 700;
	}

	td.lined {
		border-bottom-color: #000;
	}

	td.edge {
		border-right-color: #000;
	}

	td.shaded {
		background: #c6c6c6;
	}

	td.shaded:not(.lined) {
		border-bottom-color: #ababab;
	}

	.selection {
		position: absolute;
		z-index: 1;
		left: -2px;
		right: -2px;
		top: calc(100% - 1px);
		height: 200vh;
		border: 2px solid #217346;
		box-shadow: inset 0 0 0 1px #fff;
	}

	.selection::after {
		content: '';
		position: absolute;
		right: -3px;
		top: -1px;
		width: 6px;
		height: 5px;
		background: #217346;
	}

	/* scroll bars */
	.vscroll,
	.hscroll {
		display: flex;
		background: #dadada;
	}

	.vscroll {
		position: relative;
		flex-direction: column;
		width: 25px;
		margin: 0 3px -2px 2px;
	}

	.vscroll button,
	.hscroll button {
		box-sizing: border-box;
		display: flex;
		align-items: center;
		justify-content: center;
		width: 25px;
		height: 25px;
		border: 1px solid #b4b4b4;
		background: #fff;
	}

	.thumb {
		flex: 1;
		border: 1px solid #b4b4b4;
		background: #fff;
	}

	.vscroll .thumb {
		border-top: 0;
		margin-bottom: 30px;
	}

	.hscroll .thumb {
		border-left: 0;
		margin-right: 40px;
	}

	/* sheet tabs */
	.sheet-tabs {
		box-sizing: border-box;
		display: flex;
		align-items: center;
		height: 33px;
		padding-right: 29px;
		border-top: 1px solid #9b9b9b;
	}

	.sheet-nav {
		box-sizing: border-box;
		display: flex;
		gap: 28px;
		width: 115px;
		padding-left: 29px;
	}

	.sheet-nav button {
		display: flex;
	}

	.sheet-tab {
		box-sizing: border-box;
		align-self: flex-start;
		height: 30px;
		margin-top: -1px;
		padding: 0 13px 3px;
		border: 1px solid #ababab;
		border-top: 0;
		border-bottom: 3px solid #217346;
		background: #fff;
		color: #217346;
		font-size: 20px;
		font-weight: 500;
	}

	.add-sheet {
		display: flex;
		margin-left: 38px;
	}

	.sheet-tabs .dots {
		margin-left: auto;
	}

	.hscroll {
		width: 39%;
		max-width: 724px;
		margin-left: 17px;
	}

	/* status bar */
	.status {
		display: flex;
		align-items: center;
		height: 32px;
		padding: 0 11px;
		border-top: 1px solid #c6c6c6;
		background: #f3f3f3;
	}

	.macro {
		margin-left: 27px;
	}

	.count {
		margin-left: auto;
	}

	.views {
		display: flex;
		align-self: stretch;
		margin-left: 29px;
	}

	.views button {
		display: flex;
		align-items: center;
		justify-content: center;
		width: 60px;
	}

	.views .on {
		background: #c6c6c6;
	}

	.minus {
		width: 11px;
		height: 2px;
		margin-left: 8px;
		background: #444;
	}

	.zoom {
		appearance: none;
		width: 150px;
		height: 2px;
		margin: 0 37px 0 9px;
		background: #a8a8a8;
	}

	.zoom::-webkit-slider-thumb {
		appearance: none;
		width: 8px;
		height: 18px;
		background: #666;
	}

	.percent {
		min-width: 48px;
		text-align: right;
	}

	/* taskbar */
	.taskbar {
		display: flex;
		height: 60px;
		background: #1f2526;
	}

	.taskbar button {
		display: flex;
		align-items: center;
		justify-content: center;
		width: 72px;
	}

	.separator {
		width: 4px;
		height: 36px;
		margin: 12px 17px 0 9px;
		border: solid #4a4f50;
		border-width: 0 1px;
		box-sizing: border-box;
	}

	.taskbar .pinned {
		position: relative;
		width: 73px;
		margin-left: 2px;
	}

	.running::after {
		content: '';
		position: absolute;
		left: 6px;
		right: 6px;
		bottom: 0;
		height: 3px;
		background: #76b9ed;
	}

	.front {
		background: #4b5152;
	}

	.front::after {
		left: 0;
		right: 0;
	}

	.tray {
		display: flex;
		align-items: center;
		gap: 14px;
		margin: 0 7px 0 auto;
		padding-right: 276px;
		border-right: 1px solid #5c6162;
	}

	.tray svg:first-child {
		margin-right: 8px;
	}

	/* things floating over the window */
	.smudge,
	.watermark,
	.meter {
		position: absolute;
		pointer-events: none;
	}

	.smudge {
		right: 30px;
		bottom: 0;
	}

	.watermark {
		right: 100px;
		bottom: 30px;
	}

	.wm-latin {
		font: 800 76px Inter, sans-serif;
	}

	.wm-cjk {
		font: 900 58px 'Noto Sans CJK SC', sans-serif;
	}

	.wm-du {
		font: 600 46px Inter, sans-serif;
	}

	.wm-url {
		font: 500 40px 'Open Sans', sans-serif;
		fill: #f0f0f0;
		stroke-width: 1px;
	}

	.meter {
		right: 0;
		top: 694px;
		width: 14px;
		height: 89px;
		border-radius: 5px 0 0 5px;
		background:
			repeating-linear-gradient(transparent 0 2px, #4d5262 2px 3px) 5px 9px / 7px 69px no-repeat,
			linear-gradient(#30333e 0 33px, #c5c353 33px, #8cc488 52px, #58c4ae) 5px 9px / 7px 69px no-repeat,
			#4d5262;
		box-shadow: 0 0 2px #333;
	}
</style>
